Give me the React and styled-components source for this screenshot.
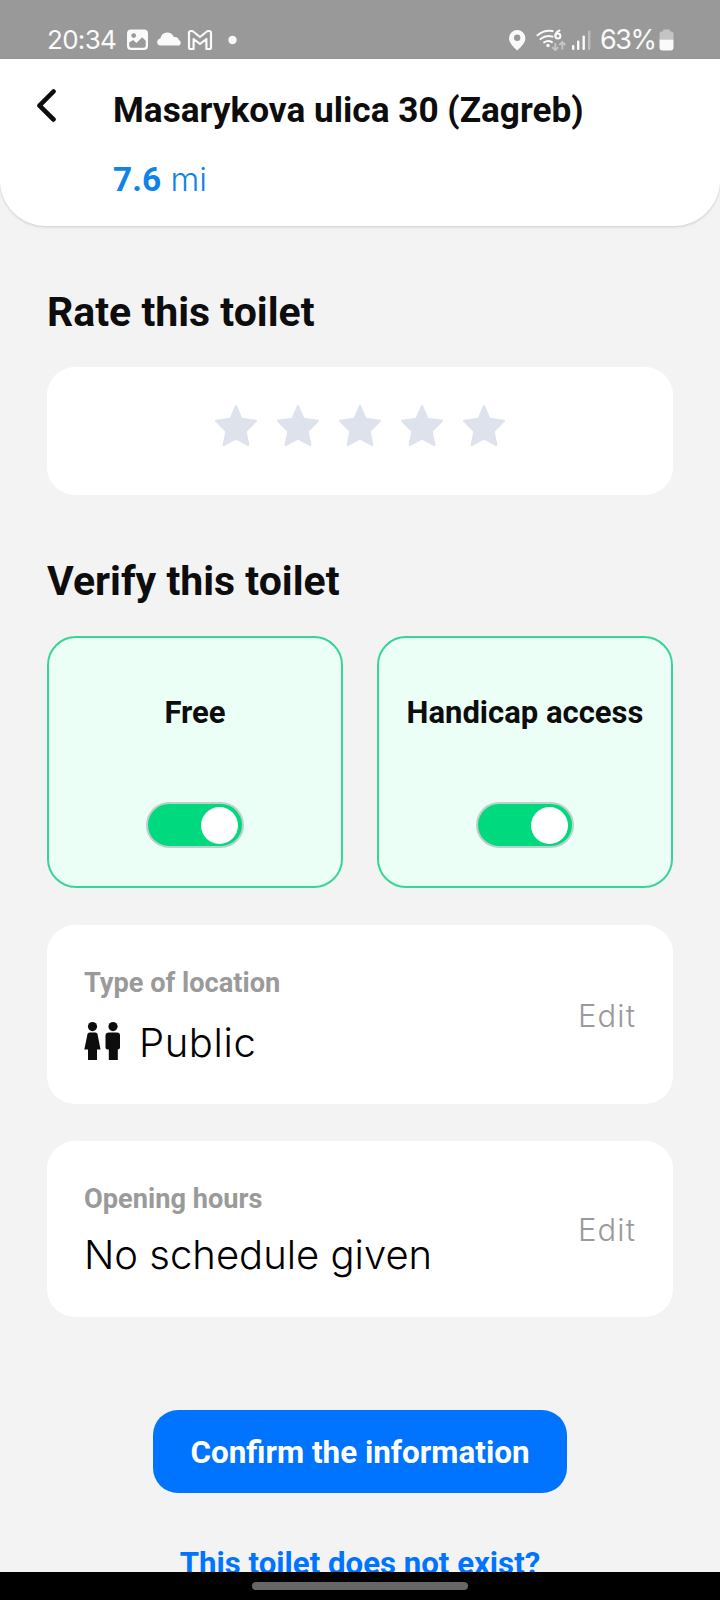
import styled, { createGlobalStyle } from "styled-components";

const colors = {
  page: "#f3f3f3",
  text: "#0d0d0d",
  muted: "#9a9a9a",
  blue: "#0073ff",
  distance: "#0f83ea",
  green: "#00d97e",
  greenBorder: "#37d696",
  greenLight: "#ecfff7",
  star: "#dde2ec",
};

const GlobalStyle = createGlobalStyle`
  * {
    box-sizing: border-box;
  }
  body {
    margin: 0;
    background-color: ${colors.page};
    color: ${colors.text};
    font-family: Roboto, sans-serif;
  }
`;

const Screen = styled.div`
  display: flex;
  flex-direction: column;
  width: 720px;
  height: 1600px;
  overflow: hidden;
  background-color: ${colors.page};

  & svg {
    display: block;
    flex-shrink: 0;
  }
`;

const StatusBar = styled.div`
  display: flex;
  justify-content: space-between;
  flex-shrink: 0;
  height: 59px;
  padding: 21px 46px 0 47px;
  background-color: #999999;
  color: #fafafa;
  font-family: Inter, sans-serif;
`;

const StatusGroup = styled.div`
  display: flex;
  align-items: center;
  height: 38px;
`;

const Clock = styled.span`
  width: 80px;
  font-size: 26px;
  line-height: 38px;
  letter-spacing: -0.7px;
  white-space: nowrap;
`;

const Battery = styled.span`
  width: 59px;
  margin-left: 8px;
  font-size: 27px;
  line-height: 38px;
  letter-spacing: -1.5px;
  white-space: nowrap;
`;

const Header = styled.header`
  display: flex;
  flex-shrink: 0;
  height: 167px;
  padding: 30px 36px 0;
  background-color: #ffffff;
  border-radius: 0 0 46px 46px;
  box-shadow: 0 1px 3px rgba(0, 0, 0, 0.16);
`;

const BackButton = styled.button`
  width: 77px;
  height: 36px;
  padding: 0;
  border: 0;
  background: none;
`;

const Title = styled.h1`
  margin: 0;
  font-size: 35.2px;
  font-weight: 700;
  line-height: 43px;
  white-space: nowrap;
`;

const Distance = styled.div`
  margin-top: 27px;
  color: ${colors.distance};
  font-family: Inter, sans-serif;
  font-size: 33px;
  font-weight: 330;
  line-height: 40px;

  & strong {
    font-family: Roboto, sans-serif;
    font-size: 33.5px;
    font-weight: 700;
  }
`;

const Content = styled.main`
  display: flex;
  flex-direction: column;
  flex: 1;
  min-height: 0;
  overflow: hidden;
  padding: 62px 47px 0;
`;

const SectionTitle = styled.h2`
  height: 48px;
  margin: 0 0 31px;
  font-size: 41px;
  font-weight: 700;
  line-height: 48px;
  white-space: nowrap;
`;

const RatingCard = styled.div`
  display: flex;
  justify-content: center;
  flex-shrink: 0;
  gap: 18px;
  height: 128px;
  margin-bottom: 62px;
  padding-top: 37px;
  background-color: #ffffff;
  border-radius: 28px;
`;

const ToggleRow = styled.div`
  display: flex;
  flex-shrink: 0;
  gap: 34px;
  margin-bottom: 37px;
`;

const ToggleCard = styled.div`
  display: flex;
  flex: 1;
  flex-direction: column;
  align-items: center;
  height: 252px;
  padding-top: 55px;
  background-color: ${colors.greenLight};
  border: 2px solid ${colors.greenBorder};
  border-radius: 29px;
`;

const ToggleLabel = styled.div`
  height: 40px;
  margin-bottom: 69px;
  font-size: 31px;
  font-weight: 700;
  line-height: 40px;
  white-space: nowrap;
`;

const Switch = styled.div`
  display: flex;
  align-items: center;
  justify-content: ${({ $on }) => ($on ? "flex-end" : "flex-start")};
  width: 98px;
  height: 46px;
  padding: 0 4px;
  background-color: ${({ $on }) => ($on ? colors.green : "#e3e6ea")};
  border: 2px solid #bfcfcb;
  border-radius: 23px;
`;

const Knob = styled.div`
  width: 37px;
  height: 37px;
  border-radius: 50%;
  background-color: #ffffff;
`;

const InfoCard = styled.div`
  display: flex;
  justify-content: space-between;
  flex-shrink: 0;
  height: ${({ $height }) => $height}px;
  margin-bottom: 37px;
  padding: 40px 37px 0;
  background-color: #ffffff;
  border-radius: 28px;
`;

const InfoLabel = styled.div`
  height: 36px;
  margin-bottom: ${({ $gap }) => $gap}px;
  color: ${colors.muted};
  font-size: 27.2px;
  font-weight: 700;
  line-height: 36px;
  white-space: nowrap;
`;

const InfoValue = styled.div`
  display: flex;
  align-items: center;
  gap: 19px;
  color: #000000;
  font-family: Inter, sans-serif;
  font-size: 40px;
  font-weight: 330;
  line-height: 50px;
  letter-spacing: ${({ $spacing }) => $spacing || 0}px;
  white-space: nowrap;

  & svg {
    position: relative;
    top: -1px;
  }
`;

const EditButton = styled.button`
  height: 40px;
  margin-top: ${({ $top }) => $top}px;
  padding: 0;
  border: 0;
  background: none;
  color: ${colors.muted};
  font-family: Inter, sans-serif;
  font-size: 31px;
  font-weight: 330;
  line-height: 40px;
  letter-spacing: 1.1px;
`;

const Actions = styled.div`
  display: flex;
  flex-direction: column;
  align-items: center;
  gap: 51px;
  margin-top: 56px;
`;

const ConfirmButton = styled.button`
  width: 414px;
  height: 83px;
  padding: 2px 0 0;
  border: 0;
  border-radius: 25px;
  background-color: ${colors.blue};
  color: #ffffff;
  font-family: Roboto, sans-serif;
  font-size: 31.4px;
  font-weight: 700;
`;

const MissingLink = styled.a`
  color: ${colors.blue};
  font-size: 31.2px;
  font-weight: 700;
  line-height: 40px;
  white-space: nowrap;
`;

const NavBar = styled.div`
  display: flex;
  justify-content: center;
  flex-shrink: 0;
  height: 28px;
  padding-top: 10px;
  background-color: #000000;
`;

const NavHandle = styled.div`
  width: 216px;
  height: 8px;
  border-radius: 4px;
  background-color: #666666;
`;

const NotificationIcons = () => (
  <svg width="112" height="22" viewBox="0 0 112 22" fill="#fafafa">
    <path
      fillRule="evenodd"
      d="M4 0.5h13a4 4 0 0 1 4 4v12.500a4 4 0 0 1-4 4H4a4 4 0 0 1-4-4V4.500a4 4 0 0 1 4-4zM6.700 4.200a2.400 2.400 0 1 0 0 4.800a2.400 2.400 0 0 0 0-4.800zM2.200 13.500v3.200a2 2 0 0 0 2 2h12.500a2 2 0 0 0 2-2v-5l-3.500-3.400l-5.800 5.700l-3.200-3z"
    />
    <path d="M33.500 16.500C29.200 16.500 29 10.500 33.300 9.600C34.200 5.600 36.500 3.500 40 3.500C43.500 3.500 46 5.400 46.800 8C50.300 7.500 51.500 9.200 51.800 10.900C54.700 11.800 54.300 16.500 51.300 16.500z" />
    <path
      d="M62 3.300v14.900q0 1.800 1.600 1.800h3v-10l6.400 5l6.400-5v10h3q1.600 0 1.600-1.800V4q0-2-2-2h-1.500L73 8L65.500 2H64q-2 0-2 2z"
      fill="none"
      stroke="#fafafa"
      strokeWidth="2.200"
      strokeLinejoin="round"
    />
    <circle cx="105.500" cy="11" r="4.200" />
  </svg>
);

const SignalIcons = () => (
  <svg width="83" height="22" viewBox="0 0 83 22" fill="#fafafa">
    <path
      fillRule="evenodd"
      d="M8.200 1a8.200 8.200 0 0 1 8.200 8.200c0 4.300-4 8.500-8.200 12.300C4 17.700 0 13.500 0 9.200A8.200 8.200 0 0 1 8.200 1zM8.200 5.600a3.200 3.200 0 1 0 0 6.400a3.200 3.200 0 0 0 0-6.400z"
    />
    <g fill="none" stroke="#fafafa" strokeWidth="2" strokeLinecap="round">
      <path d="M28.500 6.300Q35 .5 43.500 2" />
      <path d="M31.500 10Q37 5.500 43.500 7.600" />
      <path d="M35 13.500Q39 10.500 43 13.200" />
      <path d="M50.500 1.500Q46.300 3.500 46.300 7" />
      <circle cx="48.900" cy="7" r="2.500" />
    </g>
    <circle cx="39" cy="16.500" r="1.700" />
    <g fill="none" stroke="#c6c6c6" strokeWidth="1.800">
      <path d="M46.300 14v7M43.300 18.200l3 3l3-3M53.300 20.500v-7M50.300 16l3-3l3 3" />
    </g>
    <rect x="63" y="16" width="2.400" height="5" rx="1" />
    <rect x="68" y="11.500" width="2.400" height="9.500" rx="1" />
    <rect x="73.500" y="6.500" width="2.400" height="14.500" rx="1" />
    <rect x="79" y="1.500" width="2.400" height="19.500" rx="1" fill="#bcbcbc" />
  </svg>
);

const BatteryIcon = () => (
  <svg width="15" height="22" viewBox="0 0 15 22">
    <path d="M4 1.500q0-1 1-1h5q1 0 1 1v1h1.500q2 0 2 2v6H.5v-6q0-2 2-2H4z" fill="#c4c4c4" />
    <path d="M.5 10.500h14v8q0 3-3 3h-8q-3 0-3-3z" fill="#fafafa" />
  </svg>
);

const BackIcon = () => (
  <svg width="22" height="36" viewBox="0 0 22 36">
    <path
      d="M17.500 2.500L3.500 16.700L17.500 30.500"
      fill="none"
      stroke="#0d0d0d"
      strokeWidth="4.600"
      strokeLinecap="round"
      strokeLinejoin="round"
    />
  </svg>
);

const Star = () => (
  <svg width="44" height="43" viewBox="0 0 44 43">
    <path
      d="M22 2L27.500 14.800L42 16.700L31.700 27.400L34.400 41L22 34.500L9.600 41L12.300 27.400L2 16.700L16.500 14.800z"
      fill={colors.star}
      stroke={colors.star}
      strokeWidth="2"
      strokeLinejoin="round"
    />
  </svg>
);

const PeopleIcon = () => (
  <svg width="36" height="40" viewBox="0 0 36 40" fill="#0d0d0d">
    <circle cx="8.500" cy="4.600" r="4.600" />
    <path d="M5.500 10.500h6q1.500 0 2 1.500l3 15.500h-3.500v10.500h-9V27.500H.3L3.500 12q.5-1.500 2-1.500z" />
    <circle cx="29" cy="4.600" r="4.600" />
    <path d="M25 10.500h8q3 0 3 3v12q0 2-2.200 2V38h-9V27.500q-3.300 0-3.300-2v-12q0-3 3.500-3z" />
  </svg>
);

const toggles = ["Free", "Handicap access"];

function App() {
  return (
    <Screen>
      <GlobalStyle />
      <StatusBar>
        <StatusGroup>
          <Clock>20:34</Clock>
          <NotificationIcons />
        </StatusGroup>
        <StatusGroup>
          <SignalIcons />
          <Battery>63%</Battery>
          <BatteryIcon />
        </StatusGroup>
      </StatusBar>
      <Header>
        <BackButton>
          <BackIcon />
        </BackButton>
        <div>
          <Title>Masarykova ulica 30 (Zagreb)</Title>
          <Distance>
            <strong>7.6</strong> mi
          </Distance>
        </div>
      </Header>
      <Content>
        <SectionTitle>Rate this toilet</SectionTitle>
        <RatingCard>
          {[1, 2, 3, 4, 5].map((n) => (
            <Star key={n} />
          ))}
        </RatingCard>
        <SectionTitle>Verify this toilet</SectionTitle>
        <ToggleRow>
          {toggles.map((label) => (
            <ToggleCard key={label}>
              <ToggleLabel>{label}</ToggleLabel>
              <Switch $on>
                <Knob />
              </Switch>
            </ToggleCard>
          ))}
        </ToggleRow>
        <InfoCard $height={179}>
          <div>
            <InfoLabel $gap={17}>Type of location</InfoLabel>
            <InfoValue $spacing={0.6}>
              <PeopleIcon />
              Public
            </InfoValue>
          </div>
          <EditButton $top={31}>Edit</EditButton>
        </InfoCard>
        <InfoCard $height={176}>
          <div>
            <InfoLabel $gap={13}>Opening hours</InfoLabel>
            <InfoValue>No schedule given</InfoValue>
          </div>
          <EditButton $top={29}>Edit</EditButton>
        </InfoCard>
        <Actions>
          <ConfirmButton>Confirm the information</ConfirmButton>
          <MissingLink>This toilet does not exist?</MissingLink>
        </Actions>
      </Content>
      <NavBar>
        <NavHandle />
      </NavBar>
    </Screen>
  );
}

export default App;
